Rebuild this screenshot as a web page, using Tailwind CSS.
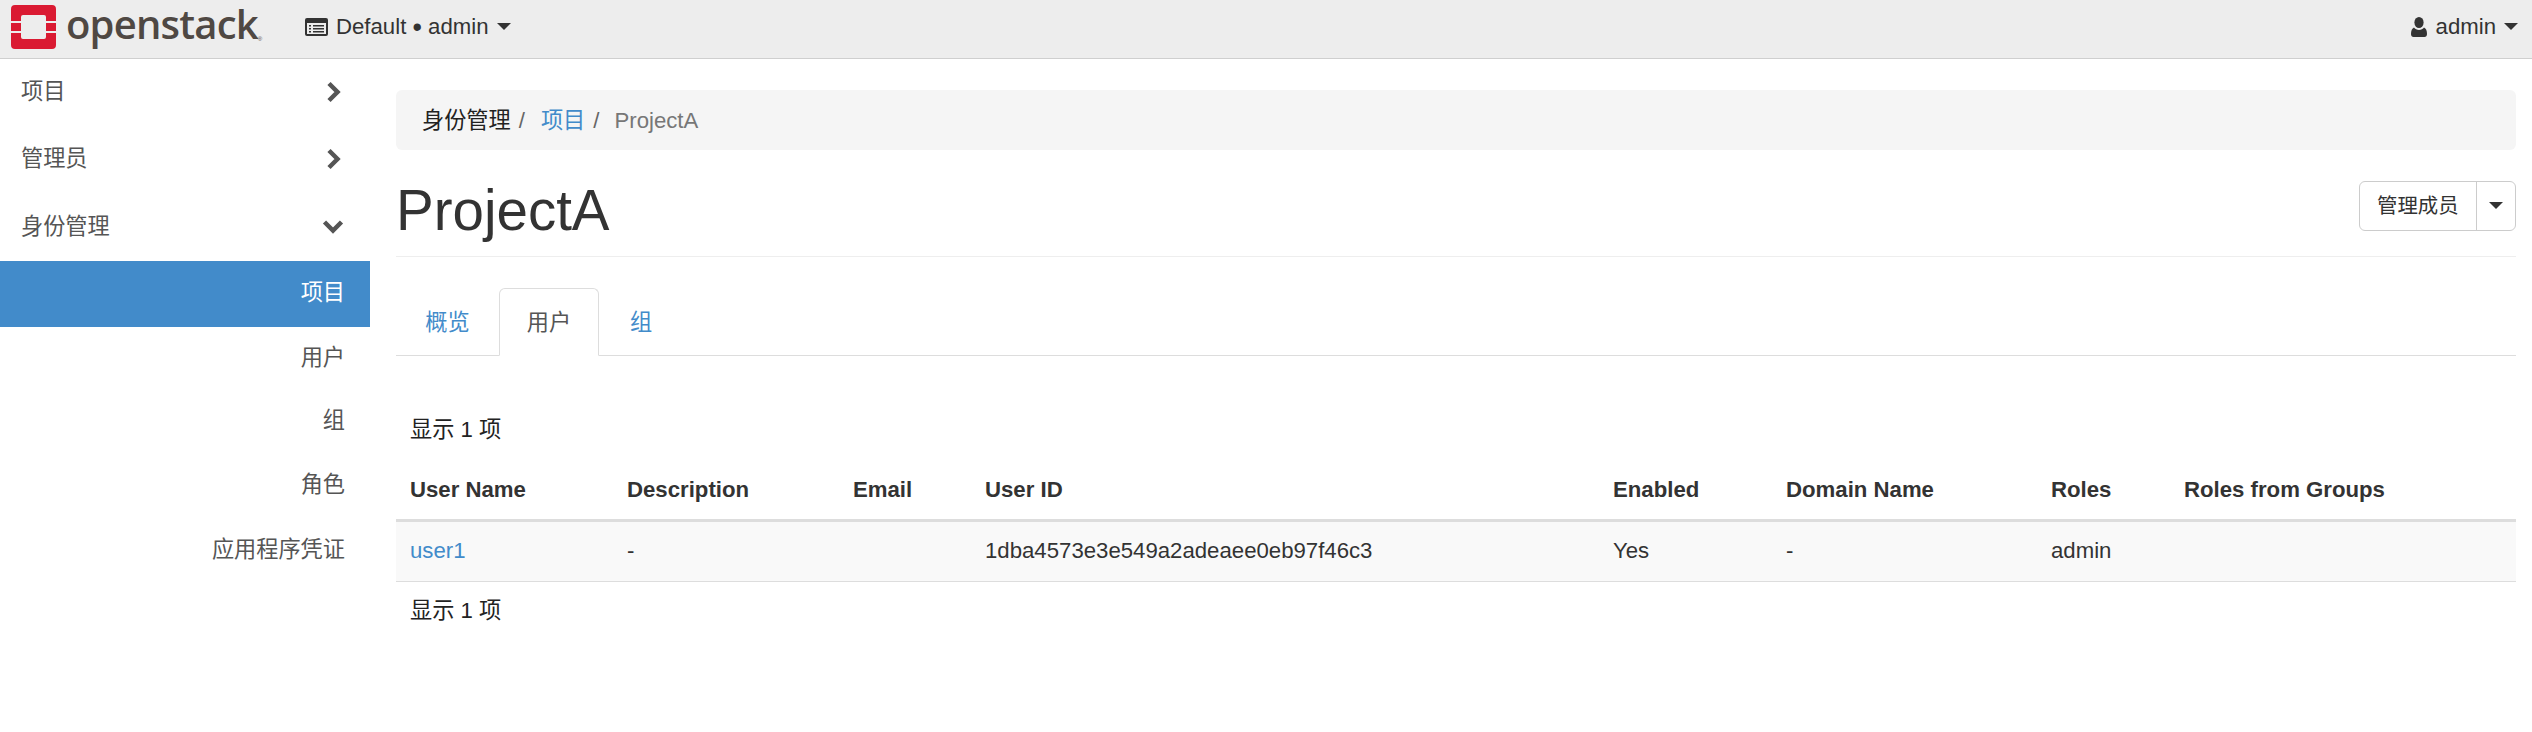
<!DOCTYPE html>
<html lang="zh">
<head>
    <meta charset="UTF-8">
    <title>ProjectA</title>
    <script src="https://cdn.jsdelivr.net/npm/@tailwindcss/browser@4"></script>
</head>
<body class="bg-white text-[#333] text-[22.2px] leading-[30px] font-['Liberation_Sans','Noto_Sans_CJK_SC',sans-serif]">

    <!-- Top navbar -->
    <nav class="h-[59px] bg-[#ededed] border-b border-[#cfcfcf] flex items-center pb-[5px]">
        <div class="flex items-center w-[305px] pl-[11px] shrink-0">
            <svg class="w-[45px] h-[44px] shrink-0" viewBox="0 0 45 44">
                <path fill="#da1a32" fill-rule="evenodd" d="M4 0h37a4 4 0 0 1 4 4v12H35v-4a2 2 0 0 0-2-2H12a2 2 0 0 0-2 2v4H0V4a4 4 0 0 1 4-4zM0 28h10v4a2 2 0 0 0 2 2h21a2 2 0 0 0 2-2v-4h10v12a4 4 0 0 1-4 4H4a4 4 0 0 1-4-4z"/>
                <rect x="0" y="18" width="10" height="8" fill="#da1a32"/>
                <rect x="35" y="18" width="10" height="8" fill="#da1a32"/>
            </svg>
            <span class="ml-[10px] text-[40px] leading-none font-semibold text-[#4f4843] tracking-[-0.8px] font-['Open_Sans',sans-serif] -mt-[6px]">openstack</span>
            <span class="text-[6px] leading-none text-[#4f4843] mt-[24px]">®</span>
        </div>
        <div class="flex items-center text-[#333]">
            <svg class="w-[23px] h-[18px] mr-[8px]" viewBox="0 0 23 18">
                <rect x="0" y="0" width="23" height="18" rx="2" fill="#333"/>
                <rect x="2" y="5" width="19" height="11" fill="#ededed"/>
                <path d="M4 7h2v1.500H4zM8 7h11v1.500H8zM4 10h2v1.500H4zM8 10h11v1.500H8zM4 13h2v1.500H4zM8 13h11v1.500H8z" fill="#333"/>
            </svg>
            <span>Default <span class="inline-block translate-y-[2px] text-[27px] leading-none">•</span> admin</span>
            <span class="ml-[8px] w-0 h-0 border-x-[7px] border-x-transparent border-t-[7px] border-t-[#333]"></span>
        </div>
        <div class="ml-auto flex items-center pr-[14px]">
            <svg class="w-[16px] h-[20px] mr-[9px]" viewBox="0 0 16 20">
                <ellipse cx="8" cy="5.500" rx="4.600" ry="5.500" fill="#333"/>
                <path d="M3 10.500C1 11.500 0 13.500 0 17c0 2 1 3 2.500 3h11c1.500 0 2.500-1 2.500-3 0-3.500-1-5.500-3-6.500-1 1.500-3 2.500-5 2.500s-4-1-5-2.500z" fill="#333"/>
            </svg>
            <span>admin</span>
            <span class="ml-[8px] w-0 h-0 border-x-[7px] border-x-transparent border-t-[7px] border-t-[#333]"></span>
        </div>
    </nav>

    <div class="flex">
        <!-- Sidebar -->
        <aside class="w-[370px] shrink-0 text-[#555]">
            <a class="h-[67px] flex items-center justify-between pl-[21px] pr-[29px] pb-[1px]">
                <span>项目</span>
                <svg class="w-[15px] h-[22px]" viewBox="0 0 15 22"><path d="M3 2.500l8.500 8.500L3 19.500" fill="none" stroke="#555" stroke-width="4.500"/></svg>
            </a>
            <a class="h-[67px] flex items-center justify-between pl-[21px] pr-[29px] pb-[1px]">
                <span>管理员</span>
                <svg class="w-[15px] h-[22px]" viewBox="0 0 15 22"><path d="M3 2.500l8.500 8.500L3 19.500" fill="none" stroke="#555" stroke-width="4.500"/></svg>
            </a>
            <a class="h-[68px] flex items-center justify-between pl-[21px] pr-[26px] pb-[1px]">
                <span>身份管理</span>
                <svg class="w-[22px] h-[15px]" viewBox="0 0 22 15"><path d="M2.500 3l8.500 8.500L19.500 3" fill="none" stroke="#555" stroke-width="4.500"/></svg>
            </a>
            <a class="h-[66px] flex items-center justify-end pr-[25px] pb-[3px] bg-[#428bca] text-white">项目</a>
            <a class="h-[64px] flex items-center justify-end pr-[25px] pb-[3px]">用户</a>
            <a class="h-[64px] flex items-center justify-end pr-[25px] pb-[4px]">组</a>
            <a class="h-[64px] flex items-center justify-end pr-[25px] pb-[4px]">角色</a>
            <a class="h-[65px] flex items-center justify-end pr-[25px] pb-[3px]">应用程序凭证</a>
        </aside>

        <!-- Main content -->
        <main class="flex-1 pl-[26px] pr-[16px] pt-[31px]">
            <div class="h-[60px] bg-[#f5f5f5] rounded-[6px] flex items-center px-[26px] pt-[2px]">
                <span class="text-[#222]">身份管理</span>
                <span class="text-[#666] px-[8px]">/</span>
                <a class="text-[#428bca] ml-[8px]">项目</a>
                <span class="text-[#666] px-[8px]">/</span>
                <span class="text-[#777] ml-[7px]">ProjectA</span>
            </div>

            <div class="h-[107px] border-b border-[#eee] flex items-center justify-between">
                <h1 class="text-[56.5px] leading-none font-normal text-[#333] mt-[16px]">ProjectA</h1>
                <div class="flex h-[50px] border border-[#ccc] rounded-[6px] items-center mt-[5px]">
                    <span class="px-[17px] w-[116px] text-[20.4px] text-[#333] whitespace-nowrap">管理成员</span>
                    <span class="w-[39px] h-full border-l border-[#ccc] flex items-center justify-center">
                        <span class="w-0 h-0 border-x-[7px] border-x-transparent border-t-[7px] border-t-[#333]"></span>
                    </span>
                </div>
            </div>

            <div class="mt-[31px] h-[68px] border-b border-[#ddd] flex">
                <a class="w-[103px] h-[67px] flex items-center justify-center pt-[2px] text-[#428bca]">概览</a>
                <a class="w-[100px] h-[68px] flex items-center justify-center pt-[2px] border border-[#ddd] border-b-white rounded-t-[6px] text-[#555] bg-white">用户</a>
                <a class="h-[67px] flex items-center pt-[2px] text-[#428bca] ml-[31px]">组</a>
            </div>

            <table class="mt-[48px] w-full table-fixed border-collapse">
                <colgroup>
                    <col class="w-[217px]"><col class="w-[226px]"><col class="w-[132px]"><col class="w-[628px]">
                    <col class="w-[173px]"><col class="w-[265px]"><col class="w-[133px]"><col>
                </colgroup>
                <thead>
                    <tr>
                        <td colspan="8" class="h-[57px] px-[14px] pt-[11px] align-top text-[#222]">显示 1 项</td>
                    </tr>
                    <tr class="text-left font-bold h-[59px] border-b-[3px] border-[#ddd]">
                        <th class="px-[14px]">User Name</th>
                        <th class="px-[14px]">Description</th>
                        <th class="px-[14px]">Email</th>
                        <th class="px-[14px]">User ID</th>
                        <th class="px-[14px]">Enabled</th>
                        <th class="px-[14px]">Domain Name</th>
                        <th class="px-[14px]">Roles</th>
                        <th class="px-[14px]">Roles from Groups</th>
                    </tr>
                </thead>
                <tbody>
                    <tr class="h-[61px] bg-[#f9f9f9] border-b border-[#ddd]">
                        <td class="px-[14px] text-[#428bca]">user1</td>
                        <td class="px-[14px]">-</td>
                        <td class="px-[14px]"></td>
                        <td class="px-[14px]">1dba4573e3e549a2adeaee0eb97f46c3</td>
                        <td class="px-[14px]">Yes</td>
                        <td class="px-[14px]">-</td>
                        <td class="px-[14px]">admin</td>
                        <td class="px-[14px]"></td>
                    </tr>
                </tbody>
                <tfoot>
                    <tr>
                        <td colspan="8" class="h-[60px] px-[14px] text-[#222]">显示 1 项</td>
                    </tr>
                </tfoot>
            </table>
        </main>
    </div>
</body>
</html>
